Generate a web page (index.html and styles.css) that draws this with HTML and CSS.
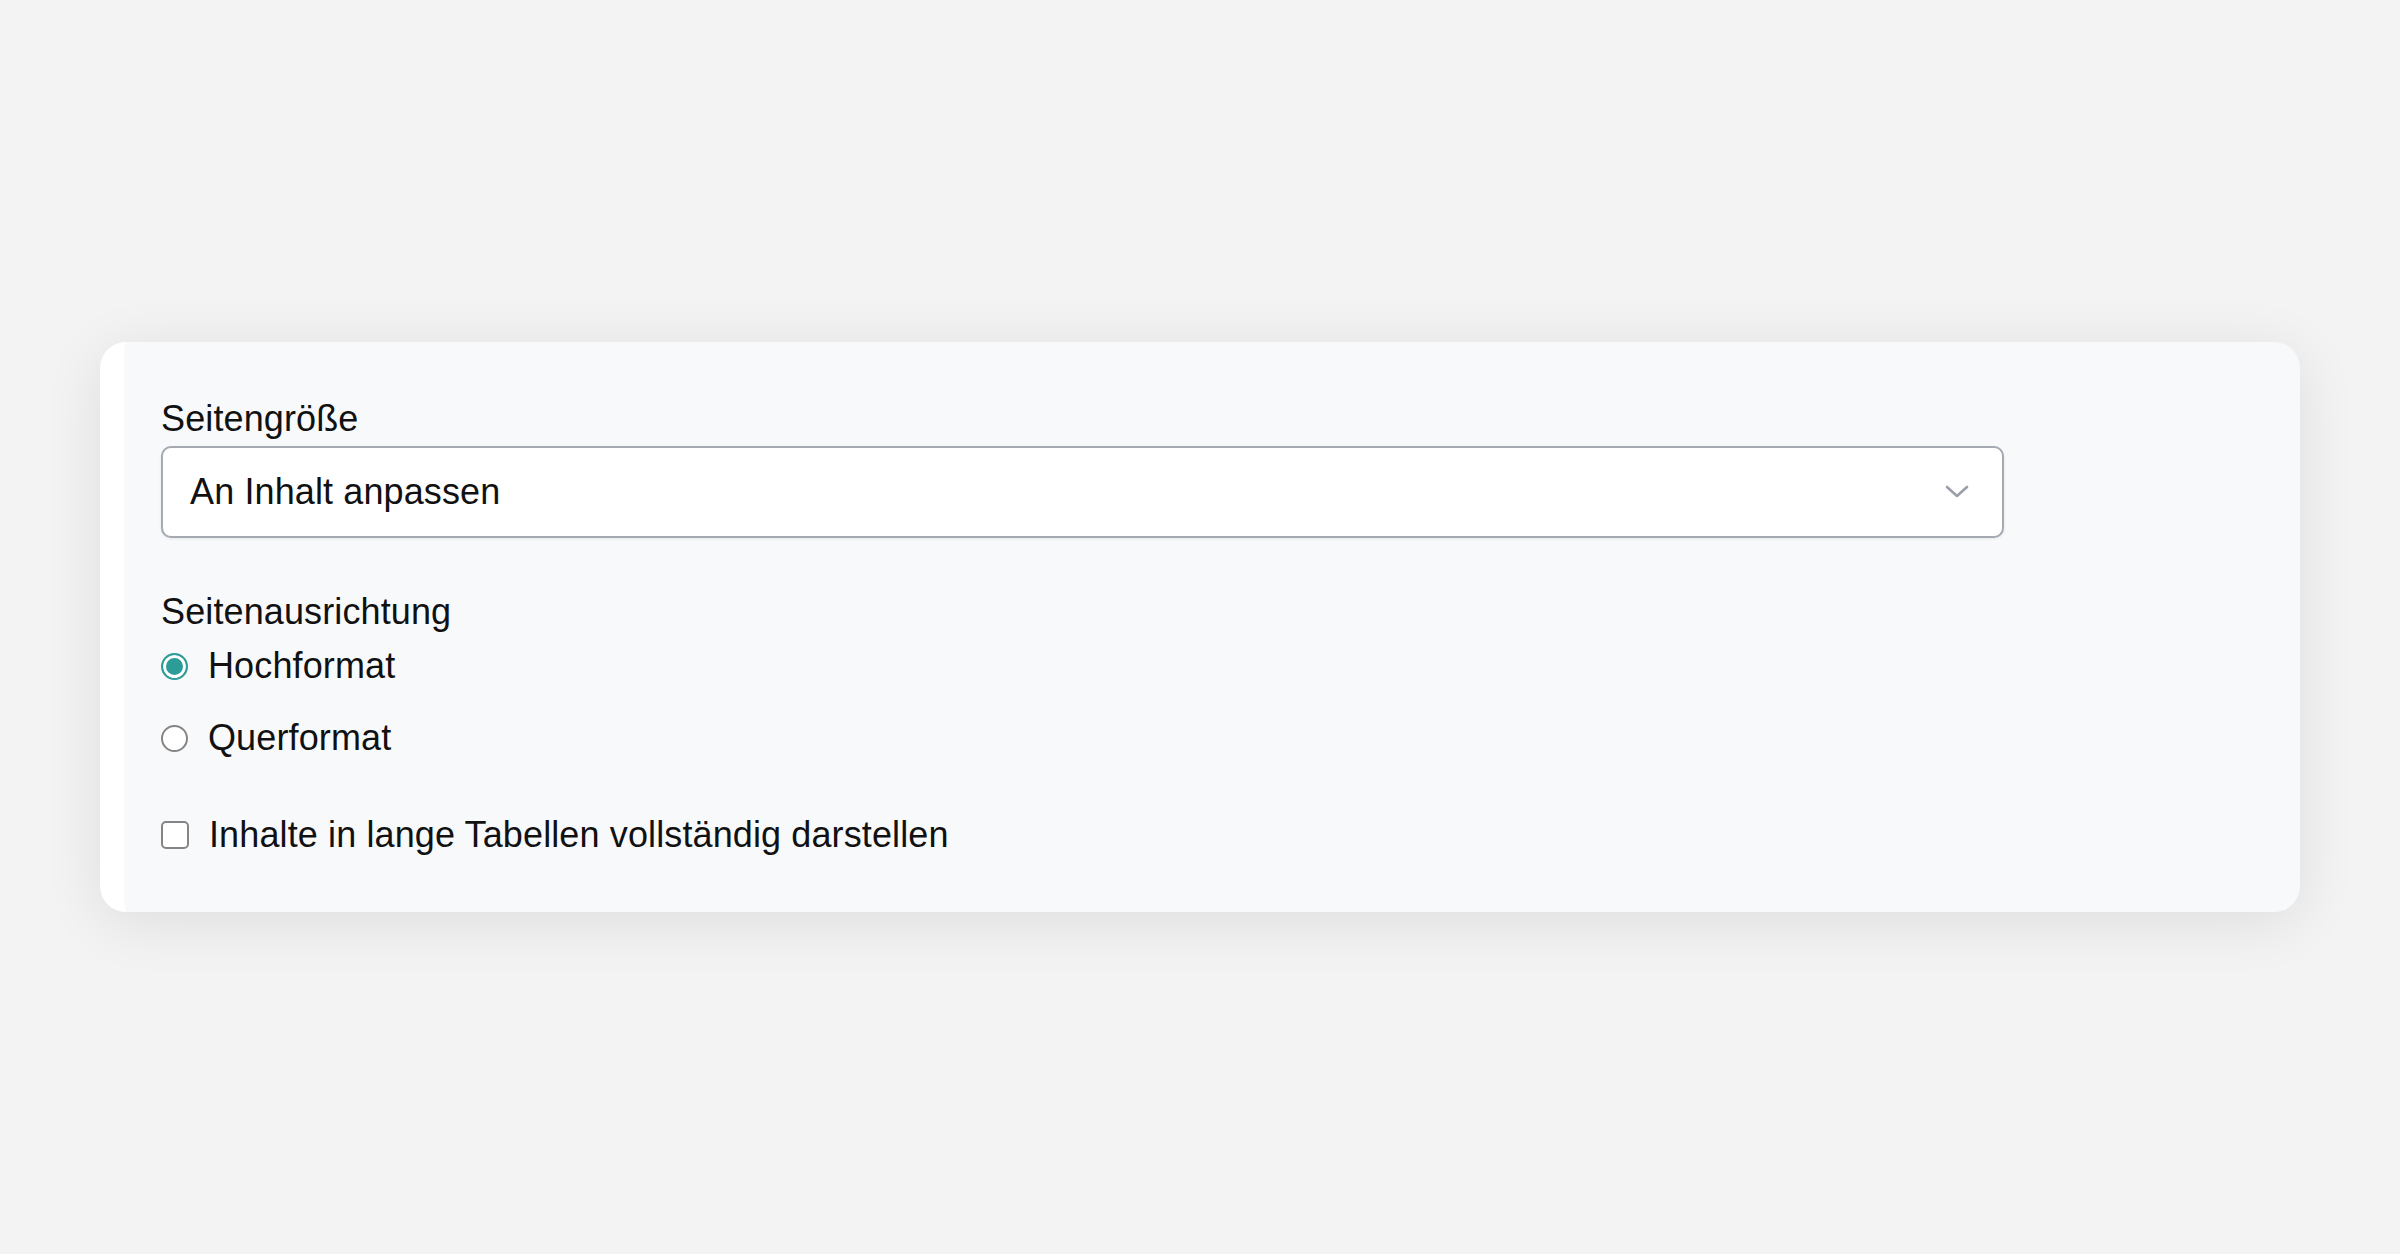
FILE: index.html
```html
<!DOCTYPE html>
<html>
<head>
    <title>Seite einrichten</title>
    <meta charset="utf-8" />
    <link rel="stylesheet" href="styles.css">
</head>
<body>
    <div class="panel">
        <div class="field-label">Seitengröße</div>
        <div class="select">
            <span class="select-value">An Inhalt anpassen</span>
            <svg class="chevron" width="24" height="14" viewBox="0 0 24 14">
                <path d="M2 2 L12 11 L22 2" fill="none" stroke="#9aa0a9" stroke-width="2.6" stroke-linecap="round" stroke-linejoin="round" />
            </svg>
        </div>

        <div class="field-label section">Seitenausrichtung</div>
        <label class="option">
            <input type="radio" name="orientation" class="radio" checked>
            <span>Hochformat</span>
        </label>
        <label class="option option-next">
            <input type="radio" name="orientation" class="radio">
            <span>Querformat</span>
        </label>

        <label class="option option-check">
            <input type="checkbox" class="check">
            <span>Inhalte in lange Tabellen vollständig darstellen</span>
        </label>
    </div>
</body>
</html>
```

FILE: styles.css
```css
html {
    background-color: #f3f3f3;
}

body {
    margin: 0;
    min-height: 100vh;
    box-sizing: border-box;
    padding: 342px 0 0 100px;
    background-color: #f3f3f3;
    font-family: "Liberation Sans", Arial, sans-serif;
    font-size: 36px;
    letter-spacing: 0.12px;
    line-height: 54px;
    color: #111111;
}

.panel {
    width: 2200px;
    box-sizing: border-box;
    padding: 50px 0px 50px 37px;
    background-color: #f8f9fb;
    border-left: 24px solid #ffffff;
    border-radius: 26px;
    box-shadow: 0px 10px 60px rgba(0, 0, 0, 0.09);
}

.field-label {
    height: 54px;
}

.field-label.section {
    margin-top: 47px;
}

.select {
    width: 1843px;
    height: 92px;
    box-sizing: border-box;
    display: flex;
    align-items: center;
    justify-content: space-between;
    padding: 0px 33px 0px 27px;
    background-color: #ffffff;
    border: 2px solid #a4a9b2;
    border-radius: 10px;
    box-shadow: 0px 1px 3px rgba(0, 0, 0, 0.08);
}

.chevron {
    display: block;
}

.option {
    display: flex;
    align-items: center;
    gap: 20px;
    height: 54px;
    cursor: pointer;
}

.option-next {
    margin-top: 18px;
}

.option-check {
    margin-top: 43px;
}

.radio,
.check {
    appearance: none;
    -webkit-appearance: none;
    margin: 0px;
    flex: none;
    background-color: #ffffff;
}

.radio {
    width: 27px;
    height: 27px;
    border-radius: 50%;
    border: 2px solid #858585;
}

.radio:checked {
    border-color: #2b9c98;
    background-color: #2b9c98;
    box-shadow: inset 0px 0px 0px 3px #ffffff;
}

.check {
    width: 28px;
    height: 28px;
    border: 2px solid #858585;
    border-radius: 5px;
}
```
